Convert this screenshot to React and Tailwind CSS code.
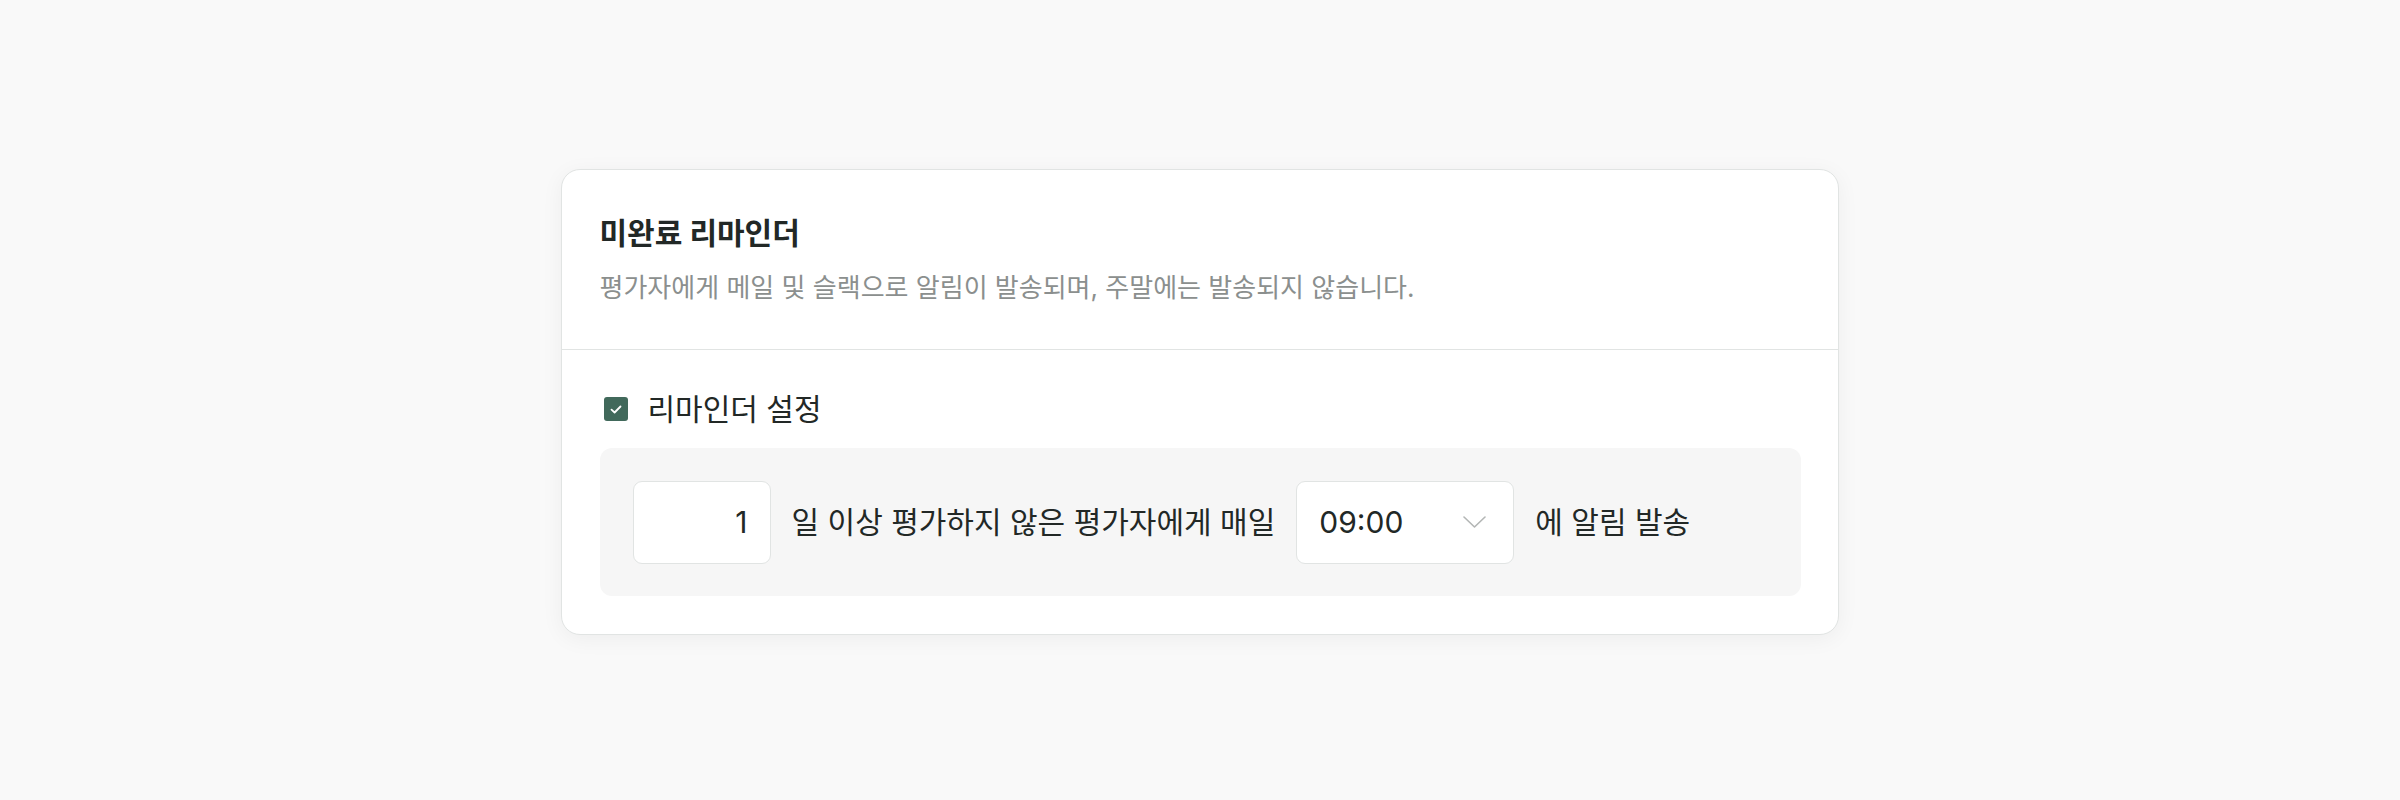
import React from 'react';

const font = { fontFamily: 'Inter, "Noto Sans CJK KR", sans-serif' };

function Check() {
  return (
    <div className="ml-[4px] flex h-[24px] w-[24px] items-center justify-center rounded-[3px] bg-[#41695b]">
      <svg width="12" height="9" viewBox="0 0 12 9" fill="none">
        <path d="M1.5 4.6 L4.6 7.5 L10.5 1.5" stroke="#fff" strokeWidth="1.8" strokeLinecap="round" strokeLinejoin="round" />
      </svg>
    </div>
  );
}

function Chevron() {
  return (
    <svg width="23" height="12" viewBox="0 0 23 12" fill="none">
      <path d="M1 1 L11.5 11 L22 1" stroke="#b3b6b5" strokeWidth="1.6" strokeLinecap="round" strokeLinejoin="round" />
    </svg>
  );
}

export default function App() {
  return (
    <div className="flex min-h-[800px] justify-center bg-[#f9f9f9] pt-[169px]" style={font}>
      <div className="w-[1278px] h-fit rounded-[19px] border-[1.5px] border-[#e1e4e3] bg-white shadow-[0_4px_22px_rgba(0,0,0,0.05)]">
        <div className="border-b-[1.5px] border-[#e1e4e3] px-[37.5px] pt-[43px] pb-[43px]">
          <h2 className="text-[30px] leading-[40px] font-bold text-[#222826]">미완료 리마인더</h2>
          <p className="mt-[17px] text-[26px] leading-[36px] text-[#8b8f8e]">
            평가자에게 메일 및 슬랙으로 알림이 발송되며, 주말에는 발송되지 않습니다.
          </p>
        </div>
        <div className="px-[37.5px] pt-[39px] pb-[38px]">
          <label className="flex h-[40px] items-center gap-[20px]">
            <Check />
            <span className="text-[30px] leading-[40px] text-[#222826]">리마인더 설정</span>
          </label>
          <div className="mt-[19px] flex h-[148px] items-center gap-[21px] rounded-[12px] bg-[#f6f6f6] px-[33px]">
            <input
              type="text"
              defaultValue="1"
              readOnly
              className="h-[83px] w-[138px] rounded-[9px] border-[1.5px] border-[#e1e4e3] bg-white pr-[22px] text-right text-[30px] text-[#222826] outline-none"
              style={font}
            />
            <span className="text-[30px] leading-[40px] text-[#222826]">일 이상 평가하지 않은 평가자에게 매일</span>
            <div className="flex h-[83px] w-[218px] items-center justify-between rounded-[9px] border-[1.5px] border-[#e1e4e3] bg-white pl-[22px] pr-[27px]">
              <span className="text-[30px] text-[#222826]">09:00</span>
              <Chevron />
            </div>
            <span className="text-[30px] leading-[40px] text-[#222826]">에 알림 발송</span>
          </div>
        </div>
      </div>
    </div>
  );
}
